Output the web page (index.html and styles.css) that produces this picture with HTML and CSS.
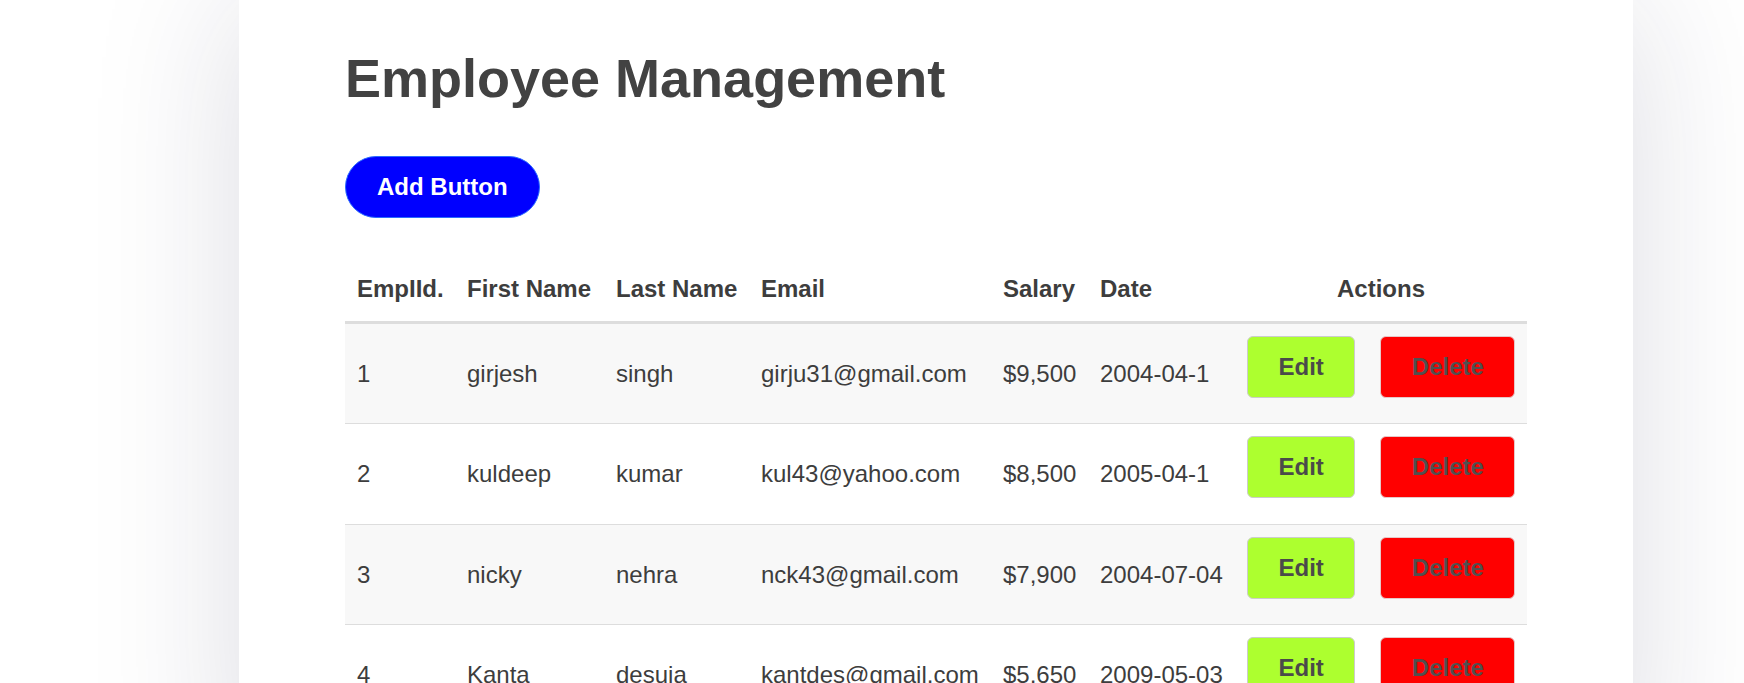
FILE: index.html
```html
<!DOCTYPE html>
<html lang="en">
<head>
<meta charset="utf-8">
<title>Employee Management</title>
<link rel="stylesheet" href="styles.css">
</head>
<body>
<main class="card">
  <h1 class="title">Employee Management</h1>
  <button class="add-btn">Add Button</button>
  <table class="emp-table">
    <colgroup>
      <col class="c-id"><col class="c-first"><col class="c-last"><col class="c-email"><col class="c-salary"><col class="c-date"><col class="c-actions">
    </colgroup>
    <thead>
      <tr>
        <th>EmpIId.</th>
        <th>First Name</th>
        <th>Last Name</th>
        <th>Email</th>
        <th>Salary</th>
        <th>Date</th>
        <th class="th-actions">Actions</th>
      </tr>
    </thead>
    <tbody>
      <tr>
        <td>1</td><td>girjesh</td><td>singh</td><td>girju31@gmail.com</td><td>$9,500</td><td>2004-04-1</td>
        <td class="actions"><div class="btns"><button class="btn edit">Edit</button><button class="btn delete">Delete</button></div></td>
      </tr>
      <tr>
        <td>2</td><td>kuldeep</td><td>kumar</td><td>kul43@yahoo.com</td><td>$8,500</td><td>2005-04-1</td>
        <td class="actions"><div class="btns"><button class="btn edit">Edit</button><button class="btn delete">Delete</button></div></td>
      </tr>
      <tr>
        <td>3</td><td>nicky</td><td>nehra</td><td>nck43@gmail.com</td><td>$7,900</td><td>2004-07-04</td>
        <td class="actions"><div class="btns"><button class="btn edit">Edit</button><button class="btn delete">Delete</button></div></td>
      </tr>
      <tr>
        <td>4</td><td>Kanta</td><td>desuja</td><td>kantdes@gmail.com</td><td>$5,650</td><td>2009-05-03</td>
        <td class="actions"><div class="btns"><button class="btn edit">Edit</button><button class="btn delete">Delete</button></div></td>
      </tr>
    </tbody>
  </table>
</main>
</body>
</html>
```
FILE: styles.css
```css
html, body {
  margin: 0;
  padding: 0;
  background: #ffffff;
  overflow: hidden;
}
body {
  font-family: "Liberation Sans", Arial, sans-serif;
  color: #404040;
}
.card {
  box-sizing: border-box;
  width: 1394px;
  margin-left: 239px;
  padding: 47px 106px 60px;
  background: #ffffff;
  min-height: 800px;
  box-shadow: 0 0 140px rgba(30, 30, 70, 0.15);
}
.title {
  margin: 0 0 47px;
  font-size: 54px;
  font-weight: bold;
  line-height: 62px;
  color: #424242;
}
.add-btn {
  display: block;
  height: 62px;
  padding: 0 31px;
  border: 1px solid #2a6bff;
  border-radius: 31px;
  background: #0000ff;
  color: #ffffff;
  font-family: "Liberation Sans", Arial, sans-serif;
  font-size: 24px;
  font-weight: bold;
  line-height: 28px;
}
.emp-table {
  margin-top: 39px;
  width: 1182px;
  table-layout: fixed;
  border-collapse: collapse;
  font-size: 24px;
  color: #3d3d3d;
}
.c-id { width: 110px; }
.c-first { width: 149px; }
.c-last { width: 145px; }
.c-email { width: 242px; }
.c-salary { width: 97px; }
.c-date { width: 147px; }
.c-actions { width: 292px; }
.emp-table th {
  text-align: left;
  font-weight: bold;
  padding: 18px 12px;
  line-height: 27.6px;
  border-bottom: 3px solid #dddddd;
  white-space: nowrap;
}
.emp-table th.th-actions {
  text-align: center;
}
.emp-table td {
  padding: 18px 12px;
  line-height: 27.6px;
  vertical-align: middle;
  white-space: nowrap;
  border-bottom: 1px solid #dddddd;
}
.emp-table tbody tr:nth-child(odd) td {
  background: #f8f8f8;
}
.emp-table td.actions {
  padding: 12px 12px 25.5px;
}
.btns {
  display: flex;
  gap: 25px;
}
.btn {
  height: 62px;
  padding: 0 30.5px;
  border: 1px solid #cccccc;
  border-radius: 6px;
  font-family: "Liberation Sans", Arial, sans-serif;
  font-size: 24px;
  font-weight: bold;
  line-height: 28px;
  color: #4a4a4a;
}
.btn.edit {
  background: #adff2f;
}
.btn.delete {
  background: #ff0000;
  color: #505050;
  border-color: #e6c8c8;
}
```
